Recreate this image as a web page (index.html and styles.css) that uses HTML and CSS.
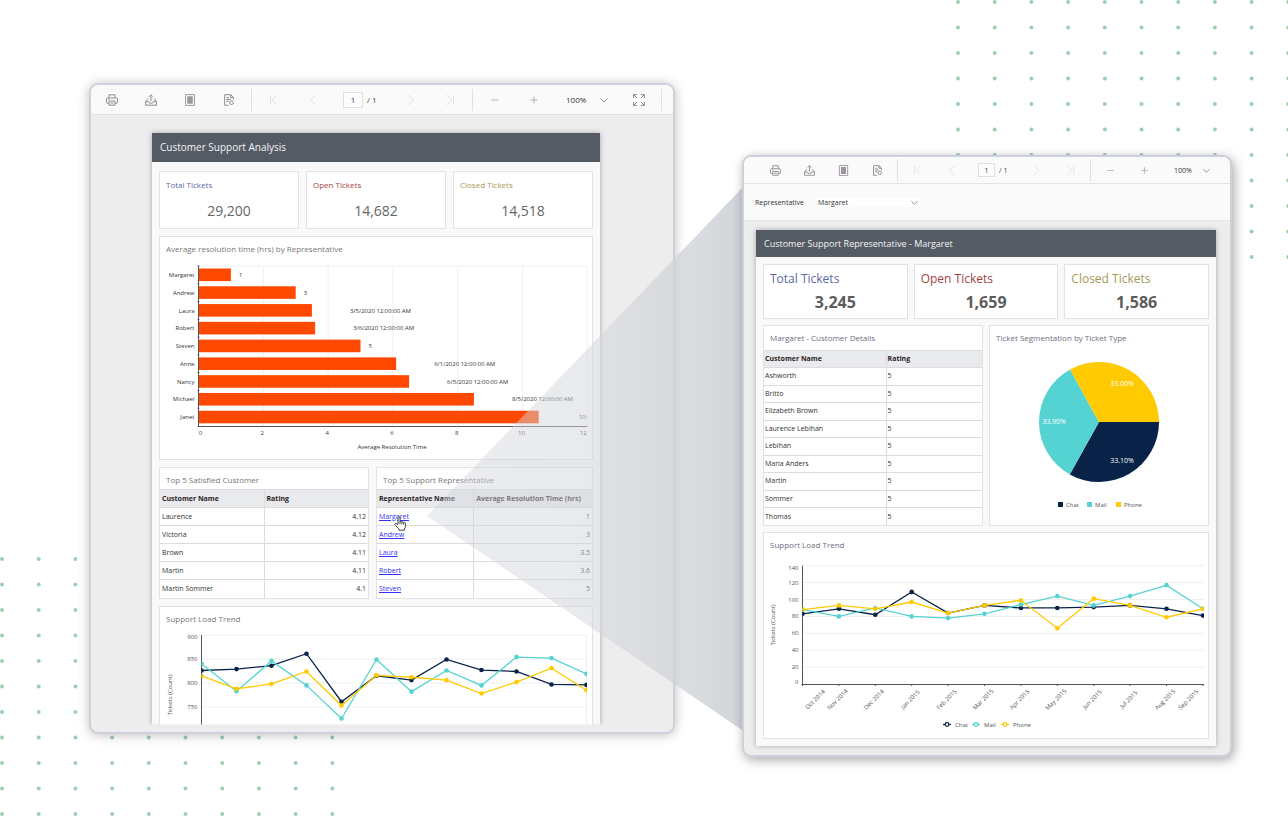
FILE: index.html
```html
<!DOCTYPE html>
<html lang="en">
<head>
<meta charset="utf-8">
<title>Customer Support Analysis</title>
<link rel="stylesheet" href="styles.css">
</head>
<body>
<svg class="sprite" aria-hidden="true">
  <symbol id="i-print" viewBox="0 0 12 12"><path d="M3 4V.8h6V4M3 9.2H1.2a.7.7 0 0 1-.7-.7V4.9c0-.5.4-.9.9-.9h9.2c.5 0 .9.4.9.9v3.6c0 .4-.3.7-.7.7H9M3 7h6v4.2H3zM2.3 5.6h1.2M4.6 9h2.8"/></symbol>
  <symbol id="i-export" viewBox="0 0 12 12"><path d="M6 7V.9M4 2.800 6 .8l2 2M3.200 4.500.6 7.400v3.800h10.800V7.400L8.800 4.500M.7 7.600h2.900l.8 1.500h3.200l.8-1.500h2.900"/></symbol>
  <symbol id="i-page" viewBox="0 0 12 12"><path class="tint" d="M1.500.6h9v10.800h-9z"/><path class="solid" d="M3.200 2.200h5.600v7.600H3.200z"/></symbol>
  <symbol id="i-setup" viewBox="0 0 12 12"><path d="M5.500 11.300H1.700V.7h6l2.600 2.500v2.300M7.500.8v2.600h2.700M3.400 3.600h2.500M3.400 5.500h4M3.400 7.300h2.500"/><circle cx="8.500" cy="8.700" r="1.800"/></symbol>
  <symbol id="i-first" viewBox="0 0 12 12"><path d="M2.500 1v10M9 1 4 6l5 5"/></symbol>
  <symbol id="i-prev" viewBox="0 0 12 12"><path d="M9 1 3.500 6 9 11"/></symbol>
  <symbol id="i-next" viewBox="0 0 12 12"><path d="m3 1 5.500 5L3 11"/></symbol>
  <symbol id="i-last" viewBox="0 0 12 12"><path d="M9.500 1v10M3 1l5 5-5 5"/></symbol>
  <symbol id="i-minus" viewBox="0 0 12 12"><path d="M2.500 6h7"/></symbol>
  <symbol id="i-plus" viewBox="0 0 12 12"><path d="M2.500 6h7M6 2.500v7"/></symbol>
  <symbol id="i-down" viewBox="0 0 12 12"><path d="m2.500 4.500 3.500 3.500 3.500-3.500"/></symbol>
  <symbol id="i-full" viewBox="0 0 12 12"><path d="M.6 4V.6H4M.6.6l3.400 3.400M8 .6h3.400V4M11.400.6 8 4M.6 8v3.400H4M.6 11.400 4 8M8 11.400h3.400V8M11.400 11.400 8 8"/></symbol>
</svg>

<main class="stage">
  <svg class="dots dots-top" viewBox="0 0 334 259" aria-hidden="true"></svg>
  <svg class="dots dots-bottom" viewBox="0 0 334 259" aria-hidden="true"></svg>

  <section class="window window-main" aria-label="Customer Support Analysis">
    <div class="toolbar">
      <button class="tool" aria-label="Print"><svg><use href="#i-print"/></svg></button>
      <button class="tool" aria-label="Export"><svg><use href="#i-export"/></svg></button>
      <button class="tool" aria-label="Print layout"><svg><use href="#i-page"/></svg></button>
      <button class="tool" aria-label="Page setup"><svg><use href="#i-setup"/></svg></button>
      <span class="divider"></span>
      <button class="tool off" aria-label="First page"><svg><use href="#i-first"/></svg></button>
      <button class="tool off" aria-label="Previous page"><svg><use href="#i-prev"/></svg></button>
      <span class="pager"><input type="text" value="1" aria-label="Page number"><span>/ 1</span></span>
      <button class="tool off" aria-label="Next page"><svg><use href="#i-next"/></svg></button>
      <button class="tool off" aria-label="Last page"><svg><use href="#i-last"/></svg></button>
      <span class="divider"></span>
      <button class="tool soft" aria-label="Zoom out"><svg><use href="#i-minus"/></svg></button>
      <button class="tool soft" aria-label="Zoom in"><svg><use href="#i-plus"/></svg></button>
      <span class="zoom"><select aria-label="Zoom"><option>100%</option></select><svg><use href="#i-down"/></svg></span>
      <button class="tool" aria-label="Full screen"><svg><use href="#i-full"/></svg></button>
      <span class="divider"></span>
    </div>
    <div class="viewer">
      <article class="report">
        <h1 class="banner">Customer Support Analysis</h1>
        <div class="report-body cut">
          <div class="row thirds">
            <div class="card kpi"><h2 class="blue">Total Tickets</h2><p>29,200</p></div>
            <div class="card kpi"><h2 class="red">Open Tickets</h2><p>14,682</p></div>
            <div class="card kpi"><h2 class="olive">Closed Tickets</h2><p>14,518</p></div>
          </div>
          <div class="card">
            <h2 class="title">Average resolution time (hrs) by Representative</h2>
            <svg class="chart" id="bars" viewBox="0 -2 432 201" role="img" aria-label="Average resolution time by representative"></svg>
          </div>
          <div class="row pair">
            <div class="card">
              <h2 class="title">Top 5 Satisfied Customer</h2>
              <table class="grid">
                <thead><tr><th>Customer Name</th><th>Rating</th></tr></thead>
                <tbody>
                  <tr><td>Laurence</td><td class="num">4.12</td></tr>
                  <tr><td>Victoria</td><td class="num">4.12</td></tr>
                  <tr><td>Brown</td><td class="num">4.11</td></tr>
                  <tr><td>Martin</td><td class="num">4.11</td></tr>
                  <tr><td>Martin Sommer</td><td class="num">4.1</td></tr>
                </tbody>
              </table>
            </div>
            <div class="card">
              <h2 class="title">Top 5 Support Representative</h2>
              <table class="grid reps">
                <thead><tr><th>Representative Name</th><th>Average Resolution Time (hrs)</th></tr></thead>
                <tbody>
                  <tr><td><span class="hovered"><a href="#detail">Margaret</a><svg class="cursor" viewBox="0 0 12 15" aria-hidden="true"><path d="M4 8.500V1.700a1 1 0 0 1 2 0V6a1 1 0 0 1 1.900.2 1 1 0 0 1 1.800.4 1 1 0 0 1 1.700.7v3.200c0 1-.6 1.600-.9 2.300v1.400H5v-1.300C4 12 2.300 10.400.9 8.700c-.5-.8.4-1.600 1.200-1.200z"/><path d="M6 6v2.200M7.900 6.400v2M9.700 6.900v1.700"/></svg></span></td><td class="num">1</td></tr>
                  <tr><td><a href="#detail">Andrew</a></td><td class="num">3</td></tr>
                  <tr><td><a href="#detail">Laura</a></td><td class="num">3.5</td></tr>
                  <tr><td><a href="#detail">Robert</a></td><td class="num">3.6</td></tr>
                  <tr><td><a href="#detail">Steven</a></td><td class="num">5</td></tr>
                </tbody>
              </table>
            </div>
          </div>
          <div class="card open">
            <h2 class="title">Support Load Trend</h2>
            <svg class="chart" id="trend" viewBox="0 0 432 97" role="img" aria-label="Support load trend"></svg>
          </div>
        </div>
      </article>
    </div>
  </section>

  <svg class="beam" viewBox="0 0 1288 816" preserveAspectRatio="none" aria-hidden="true">
    <defs><linearGradient id="beam-fill"><stop offset="0" stop-color="#d2d6dc" stop-opacity=".45"/><stop offset=".5" stop-color="#d2d5da" stop-opacity=".5"/><stop offset="1" stop-color="#ced1d6" stop-opacity=".95"/></linearGradient></defs>
    <path fill="url(#beam-fill)" d="M427 516 748 182v552z"/>
  </svg>

  <section class="window window-detail" id="detail" aria-label="Customer Support Representative">
    <div class="toolbar">
      <button class="tool" aria-label="Print"><svg><use href="#i-print"/></svg></button>
      <button class="tool" aria-label="Export"><svg><use href="#i-export"/></svg></button>
      <button class="tool" aria-label="Print layout"><svg><use href="#i-page"/></svg></button>
      <button class="tool" aria-label="Page setup"><svg><use href="#i-setup"/></svg></button>
      <span class="divider"></span>
      <button class="tool off" aria-label="First page"><svg><use href="#i-first"/></svg></button>
      <button class="tool off" aria-label="Previous page"><svg><use href="#i-prev"/></svg></button>
      <span class="pager"><input type="text" value="1" aria-label="Page number"><span>/ 1</span></span>
      <button class="tool off" aria-label="Next page"><svg><use href="#i-next"/></svg></button>
      <button class="tool off" aria-label="Last page"><svg><use href="#i-last"/></svg></button>
      <span class="divider"></span>
      <button class="tool soft" aria-label="Zoom out"><svg><use href="#i-minus"/></svg></button>
      <button class="tool soft" aria-label="Zoom in"><svg><use href="#i-plus"/></svg></button>
      <span class="zoom"><select aria-label="Zoom"><option>100%</option></select><svg><use href="#i-down"/></svg></span>
    </div>
    <div class="params">
      <label for="rep">Representative</label>
      <span class="picker"><select id="rep"><option>Margaret</option></select><svg><use href="#i-down"/></svg></span>
    </div>
    <div class="viewer">
      <article class="report">
        <h1 class="banner">Customer Support Representative - Margaret</h1>
        <div class="report-body">
          <div class="row thirds">
            <div class="card kpi"><h2 class="blue">Total Tickets</h2><p>3,245</p></div>
            <div class="card kpi"><h2 class="red">Open Tickets</h2><p>1,659</p></div>
            <div class="card kpi"><h2 class="olive">Closed Tickets</h2><p>1,586</p></div>
          </div>
          <div class="row halves">
            <div class="card">
              <h2 class="title">Margaret - Customer Details</h2>
              <table class="grid">
                <thead><tr><th>Customer Name</th><th>Rating</th></tr></thead>
                <tbody>
                  <tr><td>Ashworth</td><td>5</td></tr>
                  <tr><td>Britto</td><td>5</td></tr>
                  <tr><td>Elizabeth Brown</td><td>5</td></tr>
                  <tr><td>Laurence Lebihan</td><td>5</td></tr>
                  <tr><td>Lebihan</td><td>5</td></tr>
                  <tr><td>Maria Anders</td><td>5</td></tr>
                  <tr><td>Martin</td><td>5</td></tr>
                  <tr><td>Sommer</td><td>5</td></tr>
                  <tr><td>Thomas</td><td>5</td></tr>
                </tbody>
              </table>
            </div>
            <div class="card">
              <h2 class="title">Ticket Segmentation by Ticket Type</h2>
              <svg class="chart" id="pie" viewBox="0 2 218 175" role="img" aria-label="Ticket segmentation by ticket type"></svg>
            </div>
          </div>
          <div class="card">
            <h2 class="title">Support Load Trend</h2>
            <svg class="chart" id="months" viewBox="0 2 444 181" role="img" aria-label="Support load trend by month"></svg>
          </div>
        </div>
      </article>
    </div>
  </section>
</main>
<script src="app.js"></script>
</body>
</html>
```

FILE: styles.css
```css
* { box-sizing: border-box; }

body {
  margin: 0;
  background: #fff;
  color: #333;
  font-family: "Open Sans", "Noto Sans", sans-serif;
  font-size: 7px;
}

h1, h2, p { margin: 0; font-weight: 400; }

.sprite { position: absolute; width: 0; height: 0; }

.stage {
  position: relative;
  min-height: 100vh;
  display: grid;
  grid-template-columns: 586fr 490fr;
  align-items: start;
  gap: 67px;
  padding: 83px 56px 58px 89px;
  overflow: hidden;
}

.dots { position: absolute; width: 334px; height: 259px; fill: #9fd0ac; }
.dots-top { top: 0; right: -2px; }
.dots-bottom { bottom: 0; left: 0; }

.beam { position: absolute; inset: 0; width: 100%; height: 100%; pointer-events: none; }

.window {
  position: relative;
  border: 2px solid #cdd1db;
  border-radius: 9px;
  background: #ededed;
  overflow: hidden;
  box-shadow: 0 1px 12px rgba(0, 0, 0, .25);
}

.window-main { --step: 39px; --icon: 12px; --tool-text: 8px; }
.window-detail {
  --step: 34px; --icon: 11px; --tool-text: 7px;
  margin-top: 72px;
  box-shadow: 2px 3px 12px rgba(0, 0, 0, .35);
}

/* Toolbar */
.toolbar {
  display: flex;
  align-items: center;
  height: 30px;
  padding-left: 1px;
  background: #fafafa;
  border-bottom: 1px solid #e3e3e3;
  color: #444;
}
.window-detail .toolbar { height: 27px; padding-left: 14px; }

.tool {
  display: grid;
  place-items: center;
  flex: none;
  width: var(--step);
  height: 24px;
  padding: 0;
  border: 0;
  background: none;
}
.tool svg, .zoom svg, .picker svg {
  width: var(--icon);
  height: var(--icon);
  fill: none;
  stroke: #8c8c8c;
  stroke-width: 1;
}
.tool.off svg { stroke: #e2e2e2; }
.tool.soft svg { stroke: #b4b4b4; }
.tint { stroke: #a98fa9; }
.solid { fill: #999; stroke: none; }

.divider { flex: none; width: 1px; height: 22px; margin: 0 2px 0 3px; background: #e0e0e0; }

.pager { display: flex; align-items: center; gap: 4px; width: 59px; padding-left: 11px; font-size: var(--tool-text); }
.pager input {
  width: 20px;
  height: 16px;
  padding: 0;
  border: 1px solid #e0e0e0;
  background: #fdfdfd;
  color: #333;
  font: inherit;
  text-align: center;
}
.window-detail .pager { width: 51px; padding-left: 10px; }
.window-detail .pager input { width: 17px; height: 14px; }

.zoom, .picker { position: relative; display: flex; align-items: center; }
.zoom { width: 66px; }
.window-detail .zoom { width: 58px; }
.zoom svg { position: absolute; right: 9px; pointer-events: none; }
.window-detail .zoom svg { right: 7px; }
select {
  width: 100%;
  padding: 0 0 0 13px;
  border: 0;
  appearance: none;
  background: none;
  color: #333;
  font-family: inherit;
  font-size: var(--tool-text);
}

.params {
  display: flex;
  align-items: center;
  gap: 14px;
  height: 37px;
  padding-left: 11px;
  background: #fafafa;
  border-bottom: 1px solid #e6e6e6;
}
.picker { width: 102px; background: #fff; }
.picker select { padding-left: 0; }
.picker svg { position: absolute; right: 0; pointer-events: none; }

/* Report page */
.viewer { padding: 18px 73px 7px 61px; }
.window-detail .viewer { padding: 9px 14px 9px 12px; }
.report { background: #f9f9f9; box-shadow: 0 0 5px rgba(0, 0, 0, .3); }
.window-main .report { clip-path: inset(-8px -8px 0 -8px); }

.banner {
  padding-left: 8px;
  background: #545b64;
  color: #f4f4f4;
  font-size: 10px;
  line-height: 29px;
}
.window-detail .banner { font-size: 9px; line-height: 27px; }

.report-body { display: flex; flex-direction: column; gap: 7px; padding: 9px 7px 7px; }
.report-body.cut { padding-bottom: 0; }
.window-detail .report-body { gap: 6px; padding-top: 7px; }

.row { display: grid; gap: 7px; }
.window-detail .row { gap: 6px; }
.thirds { grid-template-columns: repeat(3, 1fr); }
.pair { grid-template-columns: 210fr 217fr; }
.halves { grid-template-columns: 1fr 1fr; }

.card { min-width: 0; border: 1px solid #e2e2e2; background: #fff; }
.card.open { border-bottom: 0; }

.title { padding: 3px 6px 0; color: #777; font-size: 8px; line-height: 18px; }
.window-detail .title { padding: 3px 6px; color: #6f6c80; }

.kpi { padding: 6px; }
.kpi h2 { font-size: 8px; line-height: 14px; }
.kpi p { padding-top: 7px; color: #666; font-size: 14px; line-height: 23px; text-align: center; }
.window-detail .kpi { padding: 4px 6px; }
.window-detail .kpi h2 { font-size: 12px; line-height: 20px; }
.window-detail .kpi p { padding: 2px 0 1px; color: #5c5c5c; font-size: 16px; font-weight: 700; line-height: 22px; }
.blue { color: #5a69a6; }
.red { color: #a04444; }
.olive { color: #a39a55; }

.grid { width: 100%; table-layout: fixed; border-collapse: collapse; }
.grid th, .grid td {
  height: 18px;
  padding: 0 2px;
  border-top: 1px solid #dcdcde;
  line-height: 10px;
  text-align: left;
  white-space: nowrap;
}
.grid th + th, .grid td + td { border-left: 1px solid #dcdcde; }
.grid th { background: #e9eaee; color: #2d2424; font-weight: 700; }
.grid .num { text-align: right; }
.grid.reps th:first-child { width: 45%; }
.window-detail .grid { height: 175px; }
.window-detail .grid th, .window-detail .grid td { height: 17px; padding: 0 1px; }
.window-detail .grid th:first-child { width: 56%; }

a { color: #3333f5; }
.hovered { position: relative; }
.cursor { position: absolute; left: 15px; top: 4px; width: 12px; height: 15px; fill: #fff; stroke: #444; stroke-width: 1; }

/* Charts */
.chart { display: block; width: 100%; overflow: hidden; }
.chart text { fill: #555; font-size: 6px; }
.chart .dark { fill: #333; }
.chart .light { fill: #fff; font-size: 7px; }
.gridline { stroke: #efefef; }
.axis { stroke: #555; }
.bar { fill: #ff4800; }
```

FILE: app.js
```js
const NS = 'http://www.w3.org/2000/svg';
const COLORS = { Chat: '#082347', Mail: '#55d3d2', Phone: '#ffca00' };

function add(parent, tag, attrs, text) {
  const el = document.createElementNS(NS, tag);
  for (const key in attrs) el.setAttribute(key, attrs[key]);
  if (text !== undefined) el.textContent = text;
  parent.appendChild(el);
  return el;
}

function line(svg, x1, y1, x2, y2, cls) {
  add(svg, 'line', { x1, y1, x2, y2, class: cls });
}

function label(svg, x, y, text, anchor = 'middle', cls = 'dark') {
  return add(svg, 'text', { x, y, 'text-anchor': anchor, class: cls }, text);
}

/* Dotted decoration: 10 columns by 11 rows */
document.querySelectorAll('.dots').forEach(svg => {
  for (let r = 0; r < 11; r++)
    for (let c = 0; c < 10; c++)
      add(svg, 'circle', { cx: 2 + c * 36.7, cy: 2 + r * 25.5, r: 2 });
});

function drawBars() {
  const svg = document.getElementById('bars');
  const x0 = 38.5, top = 6, bottom = 166, unit = 32.4, step = 160 / 9;
  const rows = [
    ['Margaret', 1, '1'], ['Andrew', 3, '3'],
    ['Laura', 3.5, '3/5/2020 12:00:00 AM'], ['Robert', 3.6, '3/6/2020 12:00:00 AM'],
    ['Steven', 5, '5'], ['Anne', 6.1, '6/1/2020 12:00:00 AM'],
    ['Nancy', 6.5, '6/5/2020 12:00:00 AM'], ['Michael', 8.5, '8/5/2020 12:00:00 AM'],
    ['Janet', 10.5, '10:']
  ];
  for (let v = 0; v <= 12; v += 2) {
    const x = x0 + v * unit;
    line(svg, x, top, x, bottom, 'gridline');
    label(svg, v === 12 ? x - 4 : v ? x - 1 : x + 2, bottom + 9, v);
  }
  line(svg, x0, top, x0 + 12 * unit, top, 'gridline');
  rows.forEach(([name, value, caption], i) => {
    const y = top + i * step, w = value * unit;
    add(svg, 'rect', { x: x0, y: y + 2.5, width: w, height: 12.6, class: 'bar' });
    label(svg, x0 - 4, y + 11, name, 'end');
    const offset = caption.length > 4 ? 38 : caption === '10:' ? 40 : 8;
    label(svg, x0 + w + offset, y + 11, caption, 'start');
    line(svg, x0 - 1, y, x0 + 1, y, 'axis');
  });
  line(svg, x0, top, x0, bottom + 1, 'axis');
  line(svg, x0 - 1, bottom + .5, x0 + 12 * unit, bottom + .5, 'axis');
  label(svg, 232, 189, 'Average Resolution Time');
}

function drawSeries(svg, id, series, x0, step, toY, right) {
  const clip = add(svg, 'clipPath', { id });
  add(clip, 'rect', { x: x0, y: 0, width: right - x0, height: 200 });
  const g = add(svg, 'g', { 'clip-path': `url(#${id})` });
  for (const name in series) {
    const pts = series[name].map((v, i) => [x0 + i * step, toY(v)]);
    add(g, 'polyline', { points: pts.join(' '), fill: 'none', stroke: COLORS[name], 'stroke-width': 1.3 });
    pts.forEach(([cx, cy]) => add(g, 'circle', { cx, cy, r: 2.3, fill: COLORS[name] }));
  }
}

function drawTrend() {
  const svg = document.getElementById('trend');
  const x0 = 41.5, right = 427, toY = v => 55 - (v - 800) * .48;
  [900, 850, 800, 750].forEach(v => {
    const y = toY(v);
    line(svg, x0 - 1, y, right, y, 'gridline');
    label(svg, x0 - 4, v === 900 ? y + 4 : y + 2, v, 'end', '');
  });
  line(svg, right - .5, toY(900), right - .5, 97, 'gridline');
  line(svg, x0, toY(900), x0, 97, 'axis');
  drawSeries(svg, 'clip-trend', {
    Chat: [826, 829, 836, 861, 761, 815, 806, 849, 827, 824, 797, 796],
    Mail: [840, 783, 846, 795, 726, 849, 782, 826, 795, 854, 852, 819],
    Phone: [815, 788, 798, 824, 753, 816, 812, 806, 778, 802, 831, 785]
  }, x0, 35, toY, right);
  add(svg, 'text', { transform: 'translate(12 67) rotate(-90)', 'text-anchor': 'middle' }, 'Tickets (Count)');
}

function drawMonths() {
  const svg = document.getElementById('months');
  const x0 = 38.5, right = 440, base = 129, step = 36.4, toY = v => base - v * .845;
  for (let v = 0; v <= 140; v += 20) {
    const y = toY(v);
    if (v) line(svg, x0 - 1, y, right, y, 'gridline');
    label(svg, x0 - 4, v === 140 ? y + 4 : v ? y + 2 : y, v, 'end', '');
  }
  line(svg, x0, toY(140), x0, base + 1, 'axis');
  line(svg, x0 - 1, base + .5, right, base + .5, 'axis');
  ['Oct 2014', 'Nov 2014', 'Dec 2014', 'Jan 2015', 'Feb 2015', 'Mar 2015', 'Apr 2015',
    'May 2015', 'Jun 2015', 'Jul 2015', 'Aug 2015', 'Sep 2015'].forEach((m, i) => {
    const x = x0 + i * step;
    line(svg, x, base, x, base + 2, 'axis');
    const cx = i === 0 ? x + 14 : i === 11 ? x - 13 : x;
    add(svg, 'text', { transform: `translate(${cx} 146) rotate(-45)`, 'text-anchor': 'middle' }, m);
  });
  drawSeries(svg, 'clip-months', {
    Chat: [83, 89, 82, 109, 84, 93, 90, 90, 91, 93, 89, 81],
    Mail: [88, 80, 90, 80, 78, 83, 94, 104, 93, 104, 117, 89],
    Phone: [88, 93, 89, 97, 84, 93, 99, 66, 101, 93, 79, 89]
  }, x0, step, toY, right);
  add(svg, 'text', { transform: 'translate(11 70) rotate(-90)', 'text-anchor': 'middle' }, 'Tickets (Count)');
  [['Chat', 183], ['Mail', 212], ['Phone', 241]].forEach(([name, x]) => {
    add(svg, 'path', { d: `M${x - 4} 169.500h8`, stroke: COLORS[name], 'stroke-width': 1.3 });
    add(svg, 'circle', { cx: x, cy: 169.5, r: 1.8, fill: '#fff', stroke: COLORS[name], 'stroke-width': 1.2 });
    label(svg, x + 8, 171.5, name, 'start', '');
  });
}

function drawPie() {
  const svg = document.getElementById('pie');
  const cx = 109, cy = 74, r = 60;
  const at = a => [cx + r * Math.cos(a), cy + r * Math.sin(a)];
  let a = 0;
  [['Chat', 33.1], ['Mail', 33.9], ['Phone', 33]].forEach(([name, share]) => {
    const b = a + share / 100 * 2 * Math.PI;
    add(svg, 'path', { d: `M${cx} ${cy}L${at(a)}A${r} ${r} 0 0 1 ${at(b)}Z`, fill: COLORS[name] });
    a = b;
  });
  label(svg, 132, 38, '33.00%', 'middle', 'light');
  label(svg, 64, 76, '33.90%', 'middle', 'light');
  label(svg, 132, 115, '33.10%', 'middle', 'light');
  [['Chat', 68], ['Mail', 97], ['Phone', 126]].forEach(([name, x]) => {
    add(svg, 'rect', { x, y: 154, width: 5, height: 5, fill: COLORS[name] });
    label(svg, x + 8, 159, name, 'start', '');
  });
}

drawBars();
drawTrend();
drawMonths();
drawPie();
```
